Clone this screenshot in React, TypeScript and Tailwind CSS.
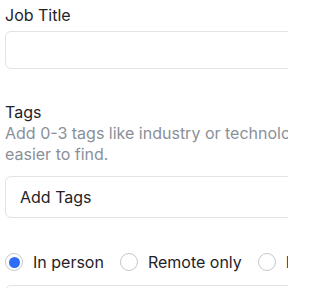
import React from "react";

function Radio({ checked }: { checked?: boolean }) {
  return (
    <span className="flex h-[18px] w-[18px] shrink-0 items-center justify-center rounded-full border border-[#c4c8cd] bg-white">
      {checked ? <span className="h-[11px] w-[11px] rounded-full bg-[#2f6cf6]" /> : null}
    </span>
  );
}

export default function App() {
  return (
    <div
      className="h-[288px] w-[288px] overflow-hidden bg-white text-[#1f2328]"
      style={{ fontFamily: "Inter, 'Noto Sans', sans-serif" }}
    >
      <div className="flex w-[460px] flex-col pl-[5px]">
        <label className="mt-[3px] text-base leading-6">Job Title</label>
        <div className="mt-[4px] h-[38px] rounded-md border border-[#e1e3e6] bg-white" />

        <label className="mt-[32px] text-base leading-[22px]">Tags</label>
        <p className="w-[420px] text-base leading-[21px] text-[#8a9099]">
          Add 0-3 tags like industry or technology to make it easier to find.
        </p>
        <div className="mt-[11px] flex h-[42px] items-center rounded-md border border-[#e1e3e6] bg-white pl-[14px] text-base">
          Add Tags
        </div>

        <div className="mt-[32px] flex h-6 items-center text-base leading-6">
          <Radio checked />
          <span className="ml-[10px]">In person</span>
          <span className="ml-[16px]">
            <Radio />
          </span>
          <span className="ml-[10px]">Remote only</span>
          <span className="ml-[16px]">
            <Radio />
          </span>
          <span className="ml-[10px]">Hybrid</span>
        </div>

        <div className="mt-[11px] h-[42px] rounded-md border border-[#e1e3e6] bg-white" />
      </div>
    </div>
  );
}
